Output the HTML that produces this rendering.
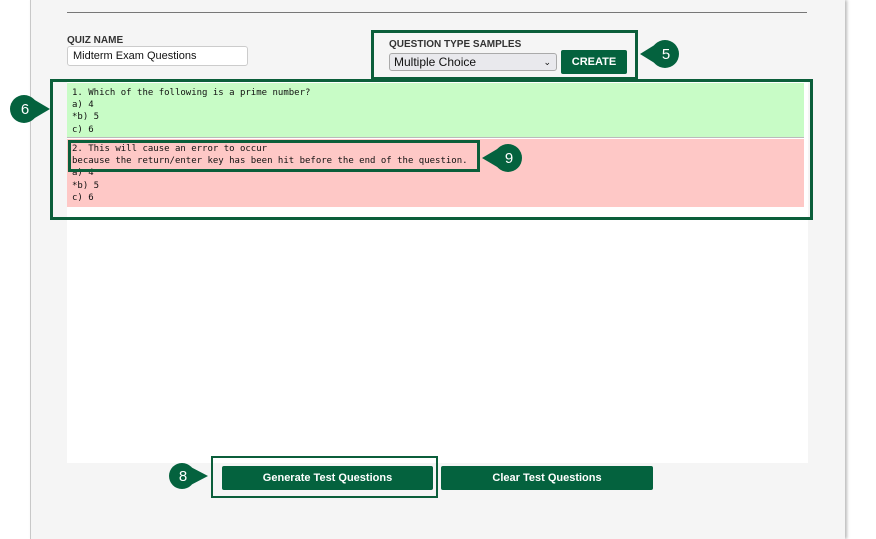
<!DOCTYPE html>
<html><head><style>
body{margin:0;width:876px;height:539px;background:#fff;position:relative;overflow:hidden;font-family:"Liberation Sans",sans-serif}
.panel{position:absolute;left:30px;top:0;width:814px;height:539px;background:#f5f5f5;border-left:1px solid #c8c8c8;box-shadow:2px 0 3px #bbb}
.abs{position:absolute}
.g{border:3px solid #0b5e3a;box-sizing:border-box}
.mono{font-family:"DejaVu Sans Mono","Liberation Mono",monospace;font-size:9px;line-height:12.2px;color:#111;white-space:pre}
.btn{background:#04623e;color:#fff;font-weight:bold;font-size:11px;text-align:center;border-radius:2px}
</style></head><body>
<div class="panel"></div>
<div class="abs" style="left:67px;top:12px;width:740px;height:1px;background:#777"></div>
<div class="abs" style="left:67px;top:35px;font-size:10px;font-weight:bold;color:#333">QUIZ NAME</div>
<div class="abs" style="left:67px;top:46px;height:20px;background:#fff;border:1px solid #ccc;border-radius:3px;font-size:11px;line-height:19px;padding-left:5px;box-sizing:border-box;width:181px;color:#111">Midterm Exam Questions</div>

<div class="abs" style="left:67px;top:80px;width:741px;height:383px;background:#fff"></div>
<div class="abs mono" style="left:67px;top:83px;width:737px;height:55px;background:#c8fcc6;padding:4px 0 0 5px;box-sizing:border-box;border-bottom:1px solid #bbb">1. Which of the following is a prime number?
a) 4
*b) 5
c) 6</div>
<div class="abs mono" style="left:67px;top:139px;width:737px;height:68px;background:#fec8c6;padding:4px 0 0 5px;box-sizing:border-box">2. This will cause an error to occur
because the return/enter key has been hit before the end of the question.
a) 4
*b) 5
c) 6</div>

<div class="abs g" style="left:371px;top:30px;width:267px;height:50px"></div>
<div class="abs" style="left:389px;top:39px;font-size:10px;font-weight:bold;color:#333">QUESTION TYPE SAMPLES</div>
<div class="abs" style="left:389px;top:53px;width:168px;height:18px;background:#e9e9ed;border:1px solid #aaa;border-radius:3px;box-sizing:border-box;font-size:12px;line-height:16px;padding-left:4px;color:#111">Multiple Choice<span style="position:absolute;right:5px;top:0;font-size:9px">&#8964;</span></div>
<div class="abs btn" style="left:561px;top:50px;width:66px;height:24px;line-height:24px;font-size:11px">CREATE</div>

<div class="abs g" style="left:50px;top:79px;width:763px;height:141px"></div>
<div class="abs g" style="left:68px;top:140px;width:412px;height:32px"></div>
<div class="abs g" style="left:211px;top:456px;width:227px;height:42px;border-width:2px"></div>
<div class="abs btn" style="left:222px;top:466px;width:211px;height:24px;line-height:24px">Generate Test Questions</div>
<div class="abs btn" style="left:441px;top:466px;width:212px;height:24px;line-height:24px">Clear Test Questions</div>

<svg class="abs" style="left:0;top:0" width="876" height="539">
<g fill="#04623e">
<circle cx="24" cy="109" r="14"/><path d="M28 96 L50 109 L28 122Z"/>
<circle cx="665" cy="54" r="14"/><path d="M661 41 L640 54 L661 67Z"/>
<circle cx="508" cy="158" r="14"/><path d="M504 145 L482 158 L504 171Z"/>
<circle cx="182" cy="476" r="13"/><path d="M185 464 L208 476 L185 488Z"/>
</g>
<g fill="#fff" font-family="Liberation Sans" font-size="15" text-anchor="middle">
<text x="25" y="114">6</text><text x="666" y="59">5</text><text x="509" y="163">9</text><text x="183" y="481">8</text>
</g>
</svg>
</body></html>
